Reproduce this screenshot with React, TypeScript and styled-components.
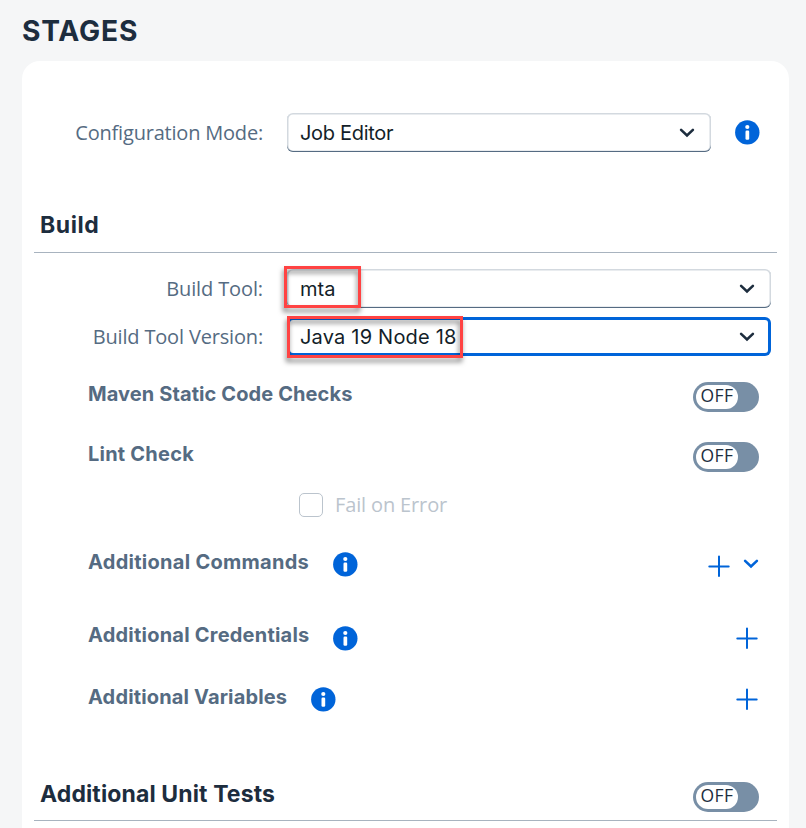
import React from 'react';
import styled, { createGlobalStyle, css } from 'styled-components';

const color = {
  page: '#f5f6f7',
  text: '#1d2d3e',
  value: '#131e29',
  label: '#556b82',
  line: '#a8b3bf',
  accent: '#0064d9',
  track: '#788fa6',
  disabled: '#bbc4cd',
  mark: '#ff4343',
};

const bodyFont = '"Open Sans", "Noto Sans", sans-serif';
const strongFont = 'Inter, "Open Sans", sans-serif';

const GlobalStyle = createGlobalStyle`
  *, *::before, *::after { box-sizing: border-box; }
  body { margin: 0; background: ${color.page}; overflow: hidden; }
`;

const Page = styled.main`
  height: 828px;
  padding: 0 17px 0 22px;
  overflow: hidden;
  display: flex;
  flex-direction: column;
  background: ${color.page};
  color: ${color.text};
  font: 400 20px ${bodyFont};
  white-space: nowrap;
`;

const Title = styled.h1`
  margin: 0;
  flex: none;
  height: 61px;
  font: 700 28.2px/63px ${strongFont};
  letter-spacing: 0.8px;
`;

const Card = styled.section`
  flex: 1;
  padding: 52px 12px 0;
  border-radius: 18px 18px 0 0;
  background: #fff;
`;

const SectionHeader = styled.header<{ $top: number; $height: number }>`
  display: flex;
  justify-content: space-between;
  height: ${(p) => p.$height}px;
  margin-top: ${(p) => p.$top}px;
  padding: 0 18px 0 6px;
  border-bottom: 1px solid ${color.line};
`;

const SectionTitle = styled.h2<{ $tracking: number }>`
  margin: 0;
  align-self: center;
  font: 700 23px/28px ${strongFont};
  letter-spacing: ${(p) => p.$tracking}px;
`;

const Field = styled.div<{ $top?: number; $end?: number }>`
  display: grid;
  grid-template-columns: 229px 1fr auto;
  column-gap: 24px;
  align-items: center;
  height: 39px;
  margin-top: ${(p) => p.$top ?? 0}px;
  padding-right: ${(p) => p.$end ?? 6}px;
`;

const FieldLabel = styled.label<{ $tracking: number }>`
  text-align: right;
  color: ${color.label};
  letter-spacing: ${(p) => p.$tracking}px;
`;

const Select = styled.div<{ $focused?: boolean; $wide?: boolean }>`
  position: relative;
  display: flex;
  align-items: center;
  justify-content: space-between;
  height: 39px;
  padding: 0 15px 0 13px;
  border-radius: 6px;
  background: #fff;
  ${(p) => p.$wide && css`grid-column: 2 / -1;`}
  ${(p) =>
    p.$focused
      ? css`box-shadow: inset 0 0 0 3px ${color.accent};`
      : css`box-shadow: inset 0 -1px 0 ${color.label}, inset 0 0 0 1.5px #d3d9df;`}
`;

const Value = styled.span<{ $tracking: number }>`
  color: ${color.value};
  font-family: ${strongFont};
  letter-spacing: ${(p) => p.$tracking}px;
`;

const Mark = styled.span<{ $left: number; $top: number; $width: number }>`
  position: absolute;
  left: ${(p) => p.$left}px;
  top: ${(p) => p.$top}px;
  width: ${(p) => p.$width}px;
  height: 42px;
  border: 3px solid ${color.mark};
  filter: drop-shadow(-1px 4px 2.5px rgba(0, 0, 0, 0.5));
`;

const Row = styled.div<{ $top: number }>`
  display: flex;
  align-items: flex-start;
  height: 25px;
  margin-top: ${(p) => p.$top}px;
  padding: 0 18px 0 54px;
`;

const ToggleRow = styled(Row)`
  justify-content: space-between;
  height: 30px;
`;

const RowTitle = styled.h3<{ $tracking: number; $line?: number; $width?: number }>`
  margin: 0;
  width: ${(p) => (p.$width ? `${p.$width}px` : 'auto')};
  color: ${color.label};
  font: 700 20px/${(p) => p.$line ?? 24}px ${strongFont};
  letter-spacing: ${(p) => p.$tracking}px;
`;

const InfoSlot = styled.span`
  display: flex;
  margin-left: 23px;
`;

const Actions = styled.span<{ $drop: number }>`
  display: flex;
  gap: 10px;
  margin-left: auto;
  padding-top: ${(p) => p.$drop}px;
`;

const Track = styled.span<{ $drop?: number }>`
  display: block;
  width: 66px;
  height: 30px;
  margin-top: ${(p) => p.$drop ?? 0}px;
  padding: 3px;
  border-radius: 15px;
  background: ${color.track};
`;

const Handle = styled.span`
  display: block;
  width: 42px;
  height: 24px;
  border-radius: 12px;
  background: #fff;
  color: ${color.text};
  font: 400 17.5px/21px ${bodyFont};
  letter-spacing: 0.4px;
  text-align: center;
`;

const CheckRow = styled.label`
  display: flex;
  align-items: center;
  gap: 12px;
  height: 24px;
  margin-top: 21px;
  padding-left: 265px;
  color: ${color.disabled};
  letter-spacing: -0.14px;
`;

const CheckText = styled.span`
  line-height: 24px;
`;

const Box = styled.span`
  width: 24px;
  height: 24px;
  border: 1px solid ${color.disabled};
  border-radius: 5px;
`;

const Icon = styled.svg`
  display: block;
  flex: none;
`;

const Chevron = ({ stroke = color.text }: { stroke?: string }) => (
  <Icon width="18" height="12" viewBox="0 0 18 12" fill="none">
    <path d="M3.1 2.9 9 8.5l5.9-5.6" stroke={stroke} strokeWidth="2.6" strokeLinecap="round" />
  </Icon>
);

const Info = () => (
  <Icon width="25" height="25" viewBox="0 0 25 25">
    <circle cx="12.3" cy="12.4" r="12.2" fill={color.accent} />
    <circle cx="12.3" cy="7" r="2.1" fill="#fff" />
    <rect x="10.5" y="10.6" width="3.7" height="9.2" rx="1.2" fill="#fff" />
  </Icon>
);

const Plus = () => (
  <Icon width="24" height="24" viewBox="0 0 24 24" fill="none">
    <path d="M12 2.6v19.4M2.3 12.6h19.4" stroke={color.accent} strokeWidth="2" strokeLinecap="round" />
  </Icon>
);

const ChevronSlot = styled.span`
  display: flex;
  padding-top: 4px;
  margin: 0 -1px 0 1px;
`;

const Switch = ({ drop }: { drop?: number }) => (
  <Track $drop={drop} role="switch" aria-checked="false">
    <Handle>OFF</Handle>
  </Track>
);

export default function App() {
  return (
    <Page>
      <GlobalStyle />
      <Title>STAGES</Title>
      <Card>
        <Field $end={17}>
          <FieldLabel $tracking={-0.2}>Configuration Mode:</FieldLabel>
          <Select>
            <Value $tracking={-0.3}>Job Editor</Value>
            <Chevron />
          </Select>
          <Info />
        </Field>

        <SectionHeader $top={45} $height={56}>
          <SectionTitle $tracking={0.55}>Build</SectionTitle>
        </SectionHeader>
        <Field $top={16}>
          <FieldLabel $tracking={-0.12}>Build Tool:</FieldLabel>
          <Select $wide>
            <Value $tracking={0.1}>mta</Value>
            <Chevron />
            <Mark $left={-3} $top={-3} $width={77} />
          </Select>
        </Field>
        <Field $top={9}>
          <FieldLabel $tracking={-0.17}>Build Tool Version:</FieldLabel>
          <Select $wide $focused>
            <Value $tracking={0.2}>Java 19 Node 18</Value>
            <Chevron />
            <Mark $left={0} $top={-1} $width={176} />
          </Select>
        </Field>

        <ToggleRow $top={26}>
          <RowTitle $tracking={0.1}>Maven Static Code Checks</RowTitle>
          <Switch />
        </ToggleRow>
        <ToggleRow $top={30}>
          <RowTitle $tracking={0.22}>Lint Check</RowTitle>
          <Switch />
        </ToggleRow>
        <CheckRow>
          <Box />
          <CheckText>Fail on Error</CheckText>
        </CheckRow>

        <Row $top={35}>
          <RowTitle $tracking={0.28} $line={20} $width={222}>Additional Commands</RowTitle>
          <InfoSlot><Info /></InfoSlot>
          <Actions $drop={2}>
            <Plus />
            <ChevronSlot><Chevron stroke={color.accent} /></ChevronSlot>
          </Actions>
        </Row>
        <Row $top={49}>
          <RowTitle $tracking={0.22} $line={18} $width={222}>Additional Credentials</RowTitle>
          <InfoSlot><Info /></InfoSlot>
          <Actions $drop={0}><Plus /></Actions>
        </Row>
        <Row $top={36}>
          <RowTitle $tracking={0.15} $line={20} $width={200}>Additional Variables</RowTitle>
          <InfoSlot><Info /></InfoSlot>
          <Actions $drop={0}><Plus /></Actions>
        </Row>

        <SectionHeader $top={55} $height={54}>
          <SectionTitle $tracking={0.12}>Additional Unit Tests</SectionTitle>
          <Switch drop={15} />
        </SectionHeader>
      </Card>
    </Page>
  );
}
